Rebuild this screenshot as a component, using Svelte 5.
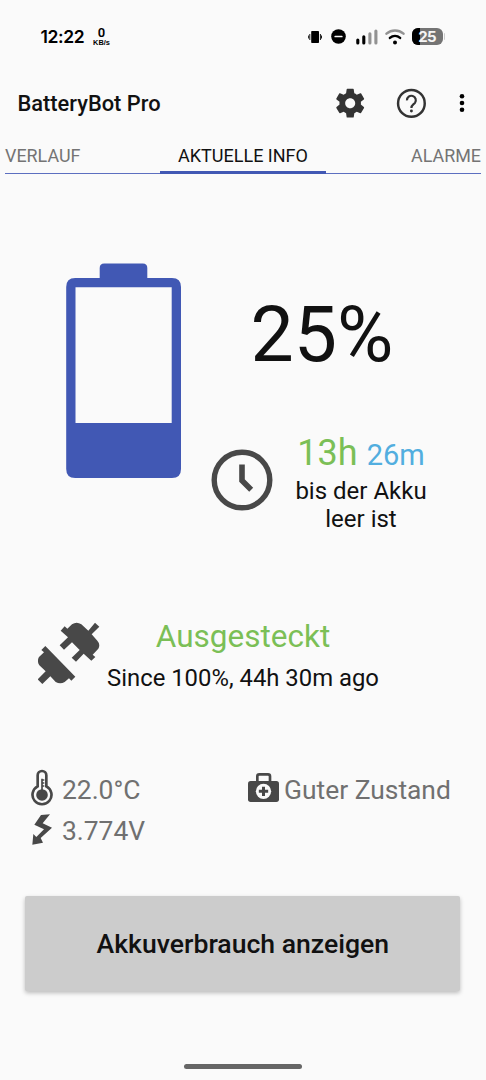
<script>
  const level = 25;
  const tabs = ['VERLAUF', 'AKTUELLE INFO', 'ALARME'];
</script>

<div class="screen">
  <header class="status">
    <div class="clock">12:22</div>
    <div class="rate"><b>0</b><span>KB/s</span></div>
    <div class="indicators">
      <svg width="14" height="14" viewBox="0 0 14 14"><rect x="3.200" y="1" width="7.800" height="12" rx=".8"/><path d="M1.800 4v6M12.400 4v6M.6 5.500v3M13.500 5.500v3" stroke="#000" stroke-width=".9"/></svg>
      <svg class="dnd" width="15" height="15" viewBox="0 0 15 15"><circle cx="7.5" cy="7.5" r="7.3"/><path d="M4.2 7.5h6.6" stroke="#fafafa" stroke-width="1.7" stroke-linecap="round"/></svg>
      <svg class="signal" width="22" height="16" viewBox="0 0 22 16"><g stroke-width="3.1" stroke-linecap="round"><path d="M1.8 11v3M7.800 7.800v6.200" stroke="#000"/><path d="M13.900 4.800V14M19.900 2v12" stroke="#929292"/></g></svg>
      <svg class="wifi" width="20" height="16" viewBox="0 0 20 16"><g fill="none" stroke-width="2.500" stroke-linecap="round"><path d="M1.500 4.600C6.500.4 13.500.4 18.500 4.600" stroke="#929292"/><path d="M4.900 8.900c3-2.500 7.200-2.500 10.200 0" stroke="#000"/></g><circle cx="10" cy="13.500" r="2"/></svg>
      <div class="pill"><i></i><span>{level}</span></div>
      <div class="nub"></div>
    </div>
  </header>

  <div class="bar">
    <h1>BatteryBot Pro</h1>
    <svg class="gear" width="34.4" height="34.4" viewBox="0 0 24 24" fill="#333"><path d="M19.430 12.980c.04-.32.07-.64.07-.98s-.03-.66-.07-.98l2.110-1.650c.19-.15.24-.42.12-.64l-2-3.460c-.12-.22-.39-.3-.61-.22l-2.490 1c-.52-.4-1.080-.73-1.690-.98l-.38-2.650C14.460 2.180 14.250 2 14 2h-4c-.25 0-.46.18-.49.42l-.38 2.650c-.61.25-1.170.59-1.690.98l-2.490-1c-.23-.09-.49 0-.61.22l-2 3.460c-.13.22-.07.49.12.64l2.110 1.650c-.04.32-.07.65-.07.98s.03.66.07.98l-2.110 1.650c-.19.15-.24.42-.12.64l2 3.460c.12.22.39.3.61.22l2.490-1c.52.4 1.080.73 1.690.98l.38 2.650c.03.24.24.42.49.42h4c.25 0 .46-.18.49-.42l.38-2.650c.61-.25 1.170-.59 1.690-.98l2.490 1c.23.09.49 0 .61-.22l2-3.460c.12-.22.07-.49-.12-.64l-2.110-1.650zM12 15.500c-1.930 0-3.500-1.570-3.500-3.500s1.570-3.500 3.500-3.500 3.500 1.570 3.500 3.500-1.570 3.500-3.500 3.500z"/></svg>
    <svg class="help" width="34.8" height="34.8" viewBox="0 0 24 24" fill="none" stroke="#333" stroke-width="1.7"><circle cx="12" cy="12" r="9.200"/><path d="M8.950 9.900a3.050 3.050 0 1 1 5.500 1.700C13.500 12.800 12 13.200 12 15.200" stroke-width="1.500"/><circle cx="12" cy="17.200" r="1" fill="#333" stroke="none"/></svg>
    <svg class="more" width="6" height="20" viewBox="0 0 6 20"><circle cx="3" cy="3.300" r="2.300"/><circle cx="3" cy="10" r="2.300"/><circle cx="3" cy="16.700" r="2.300"/></svg>
  </div>

  <nav>
    {#each tabs as tab, i}
      <div class="tab" class:active={i === 1}>{tab}</div>
    {/each}
  </nav>

  <section class="hero">
    <svg class="battery" width="116" height="216" viewBox="0 0 116 216" fill="#4158b4"><path fill-rule="evenodd" d="M33.700 15V5q0-4.500 4.500-4.500h38.600q4.500 0 4.500 4.500V15H106q9 0 9 9V206q0 9-9 9H9.200q-9 0-9-9V24q0-9 9-9zM9.500 24.200V160H105.700V24.200z"/></svg>
    <div class="readout">
      <div class="percent">{level}%</div>
      <div class="remaining">
        <svg width="62" height="62" viewBox="0 0 62 62" fill="none" stroke="#484848"><circle cx="31" cy="31" r="27.800" stroke-width="5.400"/><path d="M31 15.500V31.500L40.200 40.700" stroke-width="5.600"/></svg>
        <div class="estimate">
          <div class="time"><span class="hours">13h</span><span class="minutes">26m</span></div>
          <div class="until">bis der Akku<br />leer ist</div>
        </div>
      </div>
    </div>
  </section>

  <section class="power">
    <svg width="62" height="62" viewBox="54 66 186 186" fill="#484848"><path d="M122 92L134 79L142 86L156 73Q170 64 184 73L205 92L225 68L238 80L215 103L232 122Q242 133 235 146L218 164L226 171L214 182L191 161L168 185L155 173L179 150L156 127L132 149L119 136L144 112Z"/><path d="M76 138L166 230L154 242L147 235L134 246Q121 254 107 246L91 229L67 252L53 238L77 214L58 196Q50 183 57 171L72 157L64 150Z"/></svg>
    <div class="plug">
      <div class="state">Ausgesteckt</div>
      <div class="since">Since 100%, 44h 30m ago</div>
    </div>
  </section>

  <section class="vitals">
    <div class="vital">
      <svg class="thermo" width="22" height="37.300" viewBox="32 28 66 112"><path d="M52 80V47a13 13 0 0 1 26 0v33a28.500 28.500 0 1 1-26 0z" fill="none" stroke="#484848" stroke-width="8"/><circle cx="65" cy="106" r="17.500" fill="#484848"/><path d="M65 57v40M65 61h7M65 70h7M65 79h7" stroke="#484848" stroke-width="5"/></svg>
      <span>22.0°C</span>
    </div>
    <div class="vital health">
      <svg class="case" width="31" height="29" viewBox="36 39 93 87"><path d="M64 64V49q0-6 6-6h26q6 0 6 6v15" fill="none" stroke="#484848" stroke-width="8"/><rect x="36" y="63" width="93" height="63" rx="8" fill="#484848"/><circle cx="82.500" cy="94" r="23" fill="#fafafa"/><path d="M82.500 80v28M68.500 94h28" stroke="#484848" stroke-width="9"/></svg>
      <span>Guter Zustand</span>
    </div>
    <div class="vital">
      <svg class="bolt" width="22" height="31" viewBox="34 160 66 93" fill="#484848"><path d="M64 163L91 161L69 188L97 201L63 232L70 246L38 252L41 220L50 229L73 206L44 192Z"/></svg>
      <span>3.774V</span>
    </div>
  </section>

  <button>Akkuverbrauch anzeigen</button>
  <div class="handle"></div>
</div>

<style>
  :global(body) { background: #fafafa; }
  .screen { width: 486px; height: 1080px; overflow: hidden; box-sizing: border-box; display: flex; flex-direction: column; background: #fafafa; color: #111; font-family: Roboto, sans-serif; }
  svg { display: block; flex: none; }
  .status { height: 73px; display: flex; align-items: center; padding: 0 41px 0 40.500px; flex: none; color: #000; }
  .clock { font: 600 17.500px/20px Inter, sans-serif; letter-spacing: -.4px; width: 52.500px; white-space: nowrap; }
  .rate { display: flex; flex-direction: column; align-items: center; width: 17px; font-family: "Liberation Sans", sans-serif; }
  .rate b { font-family: Roboto, sans-serif; font-size: 13px; line-height: 12px; font-weight: 600; }
  .rate span { font-size: 7.400px; line-height: 8px; font-weight: 700; }
  .indicators { display: flex; align-items: center; margin-left: auto; }
  .dnd { margin-left: 9.500px; }
  .signal { margin-left: 9.500px; }
  .wifi { margin-left: 7.500px; }
  .pill { margin-left: 6.500px; width: 31px; height: 17px; border-radius: 6px; background: #747474; overflow: hidden; display: grid; }
  .pill i, .pill span { grid-area: 1 / 1; }
  .pill i { width: 8px; background: #000; }
  .pill span { font: 700 15px/17px Inter, sans-serif; letter-spacing: -.8px; text-align: center; color: #f5f5f5; }
  .nub { width: 1.500px; height: 7px; margin-left: 1px; background: #ccc; border-radius: 0 2px 2px 0; }
  .bar { height: 60px; display: flex; align-items: center; padding-left: 17.500px; flex: none; }
  h1 { margin: 0; font-size: 21.850px; line-height: 30px; padding-top: 2px; font-weight: 500; width: 315.300px; white-space: nowrap; }
  .help { margin-left: 26.600px; }
  .more { margin-left: 30px; }
  nav { height: 41px; margin: 0 5px; display: grid; grid-template-columns: 155px 166px 1fr; flex: none; border-bottom: 1px solid #5c6fc0; box-sizing: border-box; }
  .tab { font-size: 17.900px; line-height: 46px; height: 40px; box-sizing: border-box; color: #747474; white-space: nowrap; }
  .tab.active { color: #111; text-align: center; border-bottom: 2px solid #4158b4; font-size: 18px; box-shadow: 0 1px #4158b4; }
  .tab:last-child { text-align: right; }
  .hero { display: flex; margin-top: 89px; height: 280px; padding-left: 66px; flex: none; }
  .readout { width: 244px; margin-left: 18px; }
  .percent { font-size: 77px; line-height: 90px; margin-top: 27px; text-align: center; }
  .remaining { display: flex; margin: 50px 0 0 11px; align-items: flex-start; }
  .remaining svg { margin-top: 19px; margin-left: -.5px; }
  .estimate { width: 178px; flex: none; text-align: center; margin-left: -.5px; padding-top: 1px; }
  .time { height: 46px; display: flex; justify-content: center; align-items: baseline; gap: 9px; line-height: 44px; white-space: nowrap; }
  .hours { font-size: 36px; color: #7bbf56; }
  .minutes { font-size: 29px; color: #52aedf; }
  .until { font-size: 24px; line-height: 28px; }
  .power { display: flex; margin-top: 70px; padding-left: 38px; height: 80px; flex: none; }
  .power svg { margin-top: 9px; }
  .plug { width: 286px; text-align: center; white-space: nowrap; }
  .state { font-size: 31.500px; line-height: 46px; padding-top: 1px; margin-bottom: -1px; color: #7bbf56; }
  .since { font-size: 23.850px; line-height: 38px; color: #111; }
  .vitals { display: grid; grid-template-columns: 217px 1fr; grid-template-rows: 41px 41px; margin-top: 76px; padding-left: 31px; flex: none; color: #707070; }
  .vital { display: flex; align-items: center; font-size: 26.400px; white-space: nowrap; gap: 9px; }
  .thermo, .bolt { margin-bottom: 3px; }
  .case { margin-bottom: 4px; }
  .health { gap: 5px; }
  button { display: block; width: 435px; height: 95px; margin: 45px 0 0 25.400px; padding: 0; border: 0; border-radius: 2px; background: #ccc; color: #111; font: 500 26.600px Roboto, sans-serif; box-shadow: 0 2px 4px rgba(0,0,0,.25); flex: none; }
  .handle { width: 118px; height: 5px; border-radius: 3px; background: #666; margin: 73px 0 0 184px; flex: none; }
</style>
